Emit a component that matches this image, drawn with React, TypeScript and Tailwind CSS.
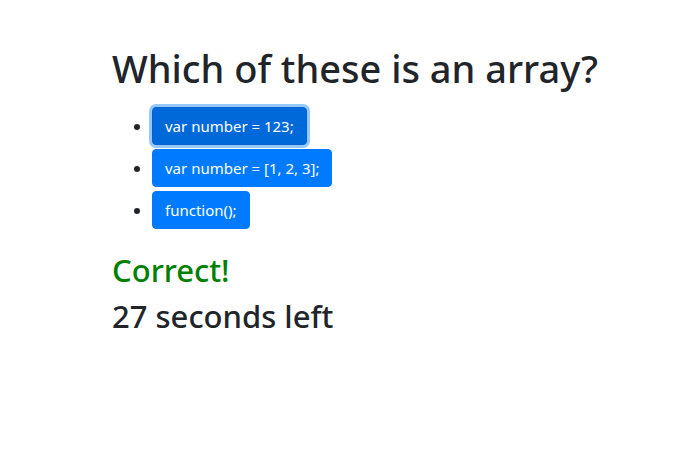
const answers = [
  { label: "var number = 123;", selected: true },
  { label: "var number = [1, 2, 3];", selected: false },
  { label: "function();", selected: false },
];

export default function App() {
  return (
    <main className="min-h-screen bg-white px-28 pt-11 font-['Noto_Sans','Open_Sans',sans-serif] text-base text-[#212529]">
      <h1 className="mb-[15px] whitespace-nowrap text-[38px] leading-12 font-medium">Which of these is an array?</h1>
      <ul className="mb-[18px] list-disc pl-10">
        {answers.map((answer) => (
          <li key={answer.label} className="h-[42px]">
            <button
              type="button"
              className={
                answer.selected
                  ? "h-[38px] rounded-sm border border-[#0062cc] bg-[#0069d9] px-3 text-[15px] text-white ring-3 ring-[#94c8ff]"
                  : "h-[38px] rounded-sm border border-[#007bff] bg-[#007bff] px-3 text-[15px] text-white"
              }
            >
              {answer.label}
            </button>
          </li>
        ))}
      </ul>
      <h2 className="mb-2 text-[31px] leading-[38px] font-medium text-[#008000]">Correct!</h2>
      <h2 className="text-[31px] leading-[38px] font-medium">27 seconds left</h2>
    </main>
  );
}
